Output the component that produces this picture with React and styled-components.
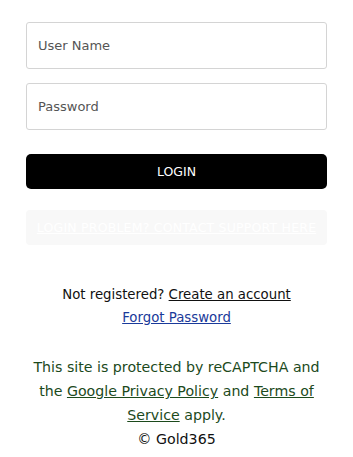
import styled, { createGlobalStyle } from "styled-components";

const GlobalStyle = createGlobalStyle`
    body {
        margin: 0;
        background: #ffffff;
        font-family: "DejaVu Sans", Tahoma, sans-serif;
    }
`

function App() {
    return (
        <>
            <GlobalStyle />
            <LoginContainer>
                <Field type="text" placeholder="User Name" />
                <Field type="password" placeholder="Password" />
                <LoginButton>LOGIN</LoginButton>
                <SupportBox>
                    <a href="#">LOGIN PROBLEM? CONTACT SUPPORT HERE</a>
                </SupportBox>
                <Register>
                    Not registered? <a href="#">Create an account</a>
                </Register>
                <Forgot href="#">Forgot Password</Forgot>
                <Recaptcha>
                    This site is protected by reCAPTCHA and the <a href="#">Google Privacy Policy</a> and <a href="#">Terms of Service</a> apply.
                </Recaptcha>
                <Copyright>© Gold365</Copyright>
            </LoginContainer>
        </>
    )
}

const LoginContainer = styled.div`
    padding: 22px 26px 0 26px;
    display: flex;
    flex-direction: column;
    align-items: center;
    text-align: center;
`

const Field = styled.input`
    box-sizing: border-box;
    width: 100%;
    height: 47px;
    margin-bottom: 14px;
    padding: 0 11px;
    border: 1px solid #d4d4d4;
    border-radius: 3px;
    font-family: "DejaVu Sans", Tahoma, sans-serif;
    font-size: 13px;
    color: #333;
    outline: none;
    &::placeholder {
        color: #555;
    }
`

const LoginButton = styled.button`
    width: 100%;
    height: 35px;
    margin-top: 10px;
    background: #000000;
    color: #ffffff;
    border: none;
    border-radius: 5px;
    font-family: "DejaVu Sans", Tahoma, sans-serif;
    font-size: 12.5px;
`

const SupportBox = styled.div`
    box-sizing: border-box;
    width: 100%;
    height: 35px;
    margin-top: 21px;
    background: #f8f8f8;
    border-radius: 4px;
    display: flex;
    align-items: center;
    justify-content: center;
    a {
        color: #ffffff;
        font-size: 12.5px;
        letter-spacing: 0.2px;
    }
`

const Register = styled.p`
    margin: 38px 0 0 0;
    font-size: 13.3px;
    line-height: 23px;
    color: #111;
    a {
        color: #111;
    }
`

const Forgot = styled.a`
    font-size: 13.3px;
    line-height: 23px;
    color: #1a3a9a;
`

const Recaptcha = styled.p`
    margin: 26px 0 0 0;
    font-size: 14.2px;
    line-height: 24px;
    color: #1c4a1c;
    a {
        color: #1c4a1c;
    }
`

const Copyright = styled.p`
    margin: 0;
    font-size: 14.2px;
    line-height: 24px;
    color: #111;
`

export default App;
